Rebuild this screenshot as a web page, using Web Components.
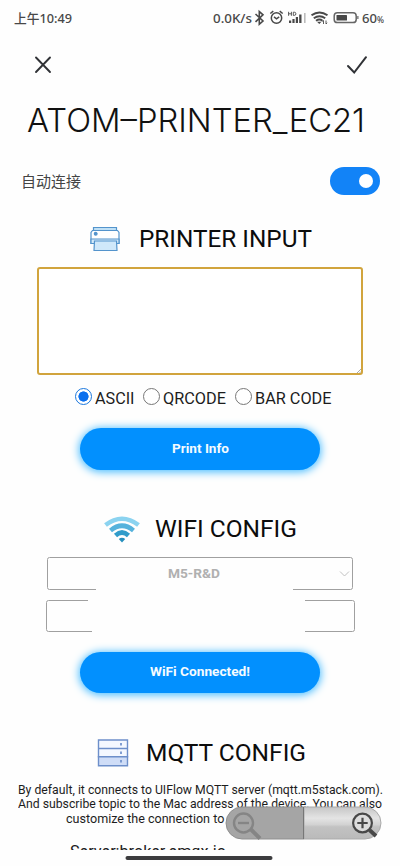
<!DOCTYPE html>
<html lang="zh">
<head>
<meta charset="utf-8">
<title>ATOM-PRINTER_EC21</title>
<style>
html,body{margin:0;background:#fefefe}
</style>
</head>
<body>
<printer-app></printer-app>
<script>
const define = (name, html, init) => {
  const t = document.createElement('template');
  t.innerHTML = html;
  customElements.define(name, class extends HTMLElement {
    connectedCallback() {
      if (this.shadowRoot) return;
      this.attachShadow({mode:'open'}).append(t.content.cloneNode(true));
      if (init) init(this, this.shadowRoot);
    }
  });
};

/* One line of text stretched to the width given in its "w" attribute. */
define('fit-text', `<style>:host{display:block;white-space:nowrap;flex:none}span{display:inline-block;transform-origin:0 50%}</style><span><slot></slot></span>`,
  (el, root) => {
    const w = +el.getAttribute('w'), s = root.querySelector('span');
    el.style.width = w + 'px';
    s.style.transform = `scaleX(${w / s.getBoundingClientRect().width})`;
  });

define('status-bar', `<style>
:host{display:flex;height:36px;padding:0 16px 0 14px;align-items:center;justify-content:space-between;box-sizing:border-box;font:500 13px/36px "Noto Sans","Noto Sans CJK SC",sans-serif;color:#484848}
.r{display:flex;align-items:center;height:36px}
svg{display:block;flex:none}
.pct{font-size:8px;padding-top:3px}
</style>
<fit-text w="58">上午10:49</fit-text>
<div class="r"><fit-text w="39">0.0K/s</fit-text>
<svg width="110" height="36" viewBox="252 0 110 36" fill="none" stroke="#484848" stroke-width="1.3">
<path d="M255.500 14l7.500 7-3.700 3.300V11.500l3.700 3.300-7.500 7" stroke-width="1.600"/>
<circle cx="276.500" cy="18" r="5.200" stroke-width="1.500"/><path d="M270.300 13.500l3-2.300M282.700 13.500l-3-2.300M274 16.800l2.500 2 2.700-2" stroke-width="1.500"/>
<g fill="#484848" stroke="none"><path d="M289 20.500h2.200v2.500h-2.200zM292.400 19h2.200v4h-2.200zM295.800 17h2.200v6h-2.200zM299.200 14.500h2.300v8.500h-2.300z"/><path d="M304 13h1.600v10h-1.600z" fill="#bbb"/></g>
<path d="M288.600 11.800v4M291.400 11.800v4M288.600 13.800h2.800M293.300 12.200h1q1.600 0 1.600 1.600t-1.600 1.600h-1z" stroke-width=".9"/>
<path d="M311.500 15.300q8-5.500 16 0M313.800 18.200q5.700-4 11.400 0M316 20.800q3.500-2.400 6.500 0" stroke-width="2"/><path d="M317 21.800h4.500l-2.200 2.200z" fill="#484848" stroke="none"/><path d="M323.500 24v-3.500l-1 1M326 20.500V24l1.200-1.200" stroke-width=".9"/>
<rect x="334.200" y="12.800" width="22" height="9.800" rx="3.200" stroke="#666" stroke-width="1.500"/><rect x="336.500" y="15" width="10.500" height="5.500" rx=".6" fill="#484848" stroke="none"/><path d="M357.900 16v3" stroke-width="1"/>
</svg><fit-text w="15">60</fit-text><fit-text class="pct" w="7">%</fit-text></div>`);

define('app-bar', `<style>:host{display:flex;height:58px;align-items:center;justify-content:space-between;padding:0 32px 0 34px}svg{display:block}</style>
<svg width="18" height="18" fill="none" stroke="#303236" stroke-width="1.9" stroke-linecap="round"><path d="M2 1.500l14 14.500M16 1.500L2 16"/></svg>
<svg width="22" height="20" fill="none" stroke="#303236" stroke-width="2" stroke-linecap="round"><path d="M2 11l6.200 6.500L20 2.200"/></svg>`);

define('toggle-row', `<style>:host{display:flex;height:70px;align-items:center;justify-content:space-between;padding:0 20px 0 21px;font:15px/24px "Noto Sans CJK SC",sans-serif;color:#444}
i{display:flex;width:50px;height:28px;border-radius:14px;background:#1283f7;align-items:center;justify-content:flex-end;padding-right:7px;box-sizing:border-box}
i::after{content:"";width:14px;height:14px;border-radius:50%;background:#fff}</style>
<fit-text w="60"><slot></slot></fit-text><i></i>`);

define('section-heading', `<style>:host{display:flex;height:32px;align-items:center;font:24px/32px Roboto,sans-serif;color:#0c0c0c;justify-content:center}
::slotted(svg){display:block;flex:none}</style><slot></slot>`);

define('radio-option', `<style>:host{display:flex;align-items:center;font:16px/20px Roboto,sans-serif;color:#1c1c1c}
i{width:17px;height:17px;box-sizing:border-box;border:1px solid #777;border-radius:50%;margin-right:3px;margin-top:-5px;background:#fff}
:host([checked]) i{border:1.500px solid #1a77dd;background:radial-gradient(circle,#0b70ee 4.800px,#fff 5.400px)}</style><i></i><slot></slot>`);

define('glow-button', `<style>:host{display:flex;width:240px;height:41.500px;border-radius:21px;background:#0290fe;box-shadow:0 1px 9px 1px #45bbff;margin:0 auto;align-items:center;justify-content:center;font:700 13.400px/20px Roboto,sans-serif;color:#f4fbff}</style><slot></slot>`);

define('zoom-control', `<style>:host{position:absolute;left:225px;top:806px;width:158px;height:34px}svg{display:block}</style>
<svg width="158" height="34"><defs><linearGradient id="g" x2="0" y2="1"><stop stop-color="#c6c6c6"/><stop offset=".35" stop-color="#e4e4e4"/><stop offset=".55" stop-color="#d2d2d2"/><stop offset=".62" stop-color="#c2c2c2"/><stop offset="1" stop-color="#bababa"/></linearGradient></defs>
<path d="M17 1h62v32H17a16 16 0 0 1 0-32z" fill="#a5a5a5" stroke="#8f8f8f"/>
<path d="M79 1h61a16 16 0 0 1 0 32H79z" fill="url(#g)" stroke="#aaa"/>
<path d="M78.500 1v32" stroke="#777"/>
<g fill="none" stroke="#858585" stroke-width="2.400"><circle cx="18.500" cy="17" r="9.500"/><path d="M13 17h11"/><path d="M26 23.500l9 9" stroke-width="4"/></g>
<g fill="none" stroke="#484848" stroke-width="2.200"><circle cx="137.500" cy="17" r="9.400" fill="#ddd"/><path d="M132.300 17h10.400M137.500 11.800v10.400"/><path d="M144.500 24l6.500 6" stroke-width="3.800"/></g></svg>`);

define('printer-app', `<style>
:host{display:block;position:relative;width:400px;height:866px;overflow:hidden;background:#fefefe;font-family:Roboto,sans-serif}
.page{display:flex;flex-direction:column;height:850px;overflow:hidden}
.page>*{flex:none}
.title{height:51px;padding:1px 0 0 27px;font:300 32.300px/52px Inter,sans-serif;color:#111}
.area{margin:12.500px 37px 0;height:108px;box-sizing:border-box;border:2px solid #d1a43d;border-radius:3px;background:#fff;display:flex;align-items:flex-end;justify-content:flex-end}
.radios{display:flex;height:20px;margin:14px 0 0 74.500px}
.sel,.inp{box-sizing:border-box;border:1px solid #a0a0a0;border-radius:2.500px;height:33px}
.sel{margin:12px 47px 0;display:flex;align-items:center;font:700 13.400px/20px Roboto,sans-serif;color:#b0b0b0;padding:0 2px 0 120px;justify-content:space-between}
.inp{margin:9.500px 45.500px 0 45.500px;height:32.500px}
.cover{position:absolute;left:86px;top:584px;width:221px;height:50px;background:#fefefe;clip-path:polygon(10px 0,207px 0,207px 12px,219px 14px,219px 50px,6px 50px,6px 24px,2px 22px,2px 14px,10px 12px)}
.note{margin-top:14px;font:12.200px/14.600px Roboto,sans-serif;color:#1d1d1d;display:flex;flex-direction:column;align-items:center}
.server{margin:16px 0 0 70px;font:16px/20px Roboto,sans-serif;color:#1d1d1d}
.home{width:147px;height:4px;border-radius:2px;background:#3c3c3e;margin:6px auto 0;transform:translateX(-1.500px)}
</style>
<div class="page">
<status-bar></status-bar>
<app-bar></app-bar>
<div class="title"><fit-text w="338">ATOM–PRINTER_EC21</fit-text></div>
<toggle-row>自动连接</toggle-row>
<section-heading style="margin-top:6.500px">
<svg width="30" height="26" viewBox="0 0 30 26" fill="#fff" stroke="#5494cc" stroke-width="1.200" style="margin-right:19px"><path d="M3.500 5V1.500h23V5" fill="#bfe0f6"/><path d="M2.500 4.500h25l1.500 2v11H1v-11z"/><path d="M1 13h28v4.500H1z" fill="#d4eafa"/><path d="M4.500 15h22l.5 9.500H4z" fill="#cfe8fa"/><circle cx="5.700" cy="7.800" r="1.400" fill="#5494cc"/></svg>
<fit-text w="173" style="margin-right:-2px">PRINTER INPUT</fit-text></section-heading>
<div class="area"><svg width="4" height="4"><path d="M4 0L0 4M4 2.500L2.500 4" stroke="#aaa"/></svg></div>
<div class="radios"><radio-option checked><fit-text w="39.500">ASCII</fit-text></radio-option><radio-option style="margin-left:8.500px"><fit-text w="63">QRCODE</fit-text></radio-option><radio-option style="margin-left:9px"><fit-text w="76.500">BAR CODE</fit-text></radio-option></div>
<glow-button style="margin-top:19px"><fit-text w="57">Print Info</fit-text></glow-button>
<section-heading style="margin-top:43.500px">
<svg width="36" height="27" viewBox="0 0 36 27" fill="none" stroke-width="4.600" style="margin-right:15px"><path d="M1.500 9Q18-3.500 34.500 9" stroke="#8bd3f0"/><path d="M6.500 14.500Q18 5 29.500 14.500" stroke="#55b2dc"/><path d="M11.500 19.500Q18 13.500 24.500 19.500" stroke="#309cca"/><path d="M14.800 23q3.200-2.400 6.400 0L18 26.500z" fill="#258fbd" stroke="none"/></svg>
<fit-text w="142" style="margin-right:0">WIFI CONFIG</fit-text></section-heading>
<div class="sel"><fit-text w="52">M5-R&amp;D</fit-text><svg width="12" height="8" fill="none" stroke="#c2c2c2"><path d="M2 1.500l4.500 4.500L11 1.500"/></svg></div>
<div class="inp"></div>
<glow-button style="margin-top:19.500px"><fit-text w="100">WiFi Connected!</fit-text></glow-button>
<section-heading style="margin-top:43.500px">
<svg width="32" height="28" viewBox="0 0 32 28" fill="#f4f8ff" stroke="#6d8fca" stroke-width="1.400" style="margin-right:17px"><path d="M1.500 1h29v8.500h-29zM1.500 9.500h29v8.300h-29z"/><path d="M1.500 17.800h29v9h-29z" fill="#cfddf7"/><path d="M24 4v2.500M24 12.500V15M24 21v2.500" stroke-width="1.700"/></svg>
<fit-text w="160" style="margin-right:-2px">MQTT CONFIG</fit-text></section-heading>
<div class="note"><fit-text w="365">By default, it connects to UIFlow MQTT server (mqtt.m5stack.com).</fit-text><fit-text w="364">And subscribe topic to the Mac address of the device. You can also</fit-text><fit-text w="268">customize the connection to other MQTT server.</fit-text></div>
<div class="server"><fit-text w="156">Server:broker.emqx.io</fit-text></div>
</div>
<div class="home"></div>
<div class="cover"></div>
<zoom-control></zoom-control>`);
</script>
</body>
</html>
